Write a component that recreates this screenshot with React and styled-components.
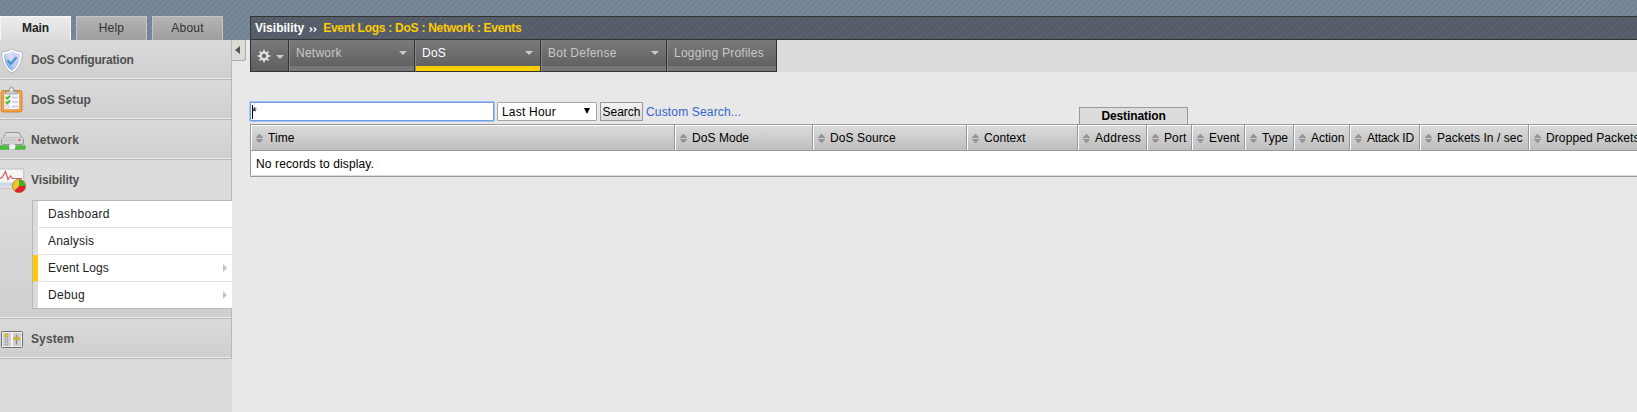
import React from "react";
import styled, { createGlobalStyle } from "styled-components";

const Global = createGlobalStyle`
  * { box-sizing: border-box; }
  html, body { margin: 0; height: 100%; overflow: hidden; }
  body { background: #e8e8e8; font: 12px/14px "Liberation Sans", Arial, sans-serif; color: #000; }
`;

const Page = styled.div`
  display: flex;
  width: 100vw;
  height: 412px;
  overflow: hidden;
  background: linear-gradient(#0000 40px, #e8e8e8 40px),
    repeating-linear-gradient(135deg, #718394 0 2.8px, #7a8b9a 2.8px 4.24px);
`;

const Sidebar = styled.aside`
  width: 232px;
  flex: none;
  display: flex;
  flex-direction: column;
`;
const Tabs = styled.div`
  display: flex;
  gap: 5px;
  height: 40px;
  padding-top: 16px;
`;
const Tab = styled.div`
  width: 71px;
  height: 24px;
  border: 1px solid ${(p) => (p.$on ? "#f6f6f6" : "#c4c4c4")};
  border-bottom: 0;
  background: ${(p) => (p.$on ? "linear-gradient(#ececec, #dcdcdc)" : "linear-gradient(#b4b4b4, #9e9e9e)")};
  color: ${(p) => (p.$on ? "#222" : "#333")};
  font-weight: ${(p) => (p.$on ? 700 : 400)};
  text-align: center;
  line-height: 22px;
  letter-spacing: ${(p) => (p.$on ? "-0.1px" : "0.2px")};
`;
const Nav = styled.nav`
  flex: 1;
  background: #dcdcdc;
`;
const Section = styled.div`
  height: ${(p) => p.$h || 40}px;
  border-right: 1px solid #b8b8b8;
  border-bottom: 1px solid #b8b8b8;
  box-shadow: inset 0 -1px #ececec;
  background: ${(p) => (p.$open ? "linear-gradient(#dcdcdc 40px, #cfcfcf)" : "linear-gradient(#dadada, #cfcfcf)")};
`;
const SectionTitle = styled.div`
  display: flex;
  align-items: center;
  height: 40px;
  font-weight: 700;
  color: #505050;
  letter-spacing: ${(p) => p.$ls || 0}px;
  svg { width: 28px; height: 28px; flex: none; margin-right: 3px; }
`;
const Submenu = styled.div`
  margin-left: 32px;
  width: 200px;
  border: 1px solid #b8b8b8;
  border-right: 0;
  background: #fff;
  position: relative;
`;
const SubItem = styled.div`
  display: flex;
  align-items: center;
  justify-content: space-between;
  height: ${(p) => (p.$last ? 26 : 27)}px;
  padding: 0 5px 0 10px;
  border-left: 5px solid ${(p) => (p.$on ? "#fc0" : "#dcdcdc")};
  border-bottom: ${(p) => (p.$last ? 0 : 1)}px solid #e2e2e2;
  color: #222;
  letter-spacing: ${(p) => p.$ls}px;
`;
const SubArrow = styled.i`
  border: solid transparent;
  border-width: 4px 0 4px 4px;
  border-left-color: #c4c4c4;
`;

const Gutter = styled.div`
  width: 18px;
  flex: none;
  padding-top: 40px;
`;
const Collapse = styled.div`
  display: flex;
  align-items: center;
  width: 14px;
  height: 21px;
  padding-left: 3px;
  background: #dedad6;
  border: 1px solid #aaa;
  border-top: 0;
  border-left: 0;
  border-radius: 0 0 3px 0;
  i { border: 4px solid transparent; border-left: 0; border-right: 5px solid #555; }
`;

const Main = styled.main`
  flex: 1;
  min-width: 0;
  padding-top: 16px;
`;
const Crumbs = styled.div`
  display: flex;
  align-items: center;
  height: 24px;
  padding-left: 4px;
  border: 1px solid #333;
  border-right: 0;
  background: repeating-linear-gradient(135deg, #545d67 0 2.8px, #5a636d 2.8px 4.24px);
  color: #fff;
  font-weight: 700;
  white-space: pre;
  svg { width: 8px; height: 5px; margin: 3px 6px 0 5px; }
`;
const Path = styled.span`
  color: #fc0;
  letter-spacing: -0.26px;
`;
const MenuStrip = styled.div`
  display: flex;
  height: 32px;
  background: #dcdcdc;
`;
const MenuCell = styled.div`
  display: flex;
  justify-content: space-between;
  width: ${(p) => p.$w}px;
  padding: 6px ${(p) => (p.$first ? 4 : 7)}px 0 6px;
  border-left: 1px solid ${(p) => (p.$first ? "#333" : "#888")};
  border-right: 1px solid #333;
  border-bottom: 1px solid #333;
  background: linear-gradient(#7a7a7a, #626262 26px, ${(p) => (p.$on ? "#fc0" : p.$first ? "#606060" : "#777")} 26px);
  color: ${(p) => (p.$on ? "#fff" : "#c8c8c8")};
  letter-spacing: ${(p) => p.$ls || 0.24}px;
  svg { width: 14px; height: 14px; margin-top: 3px; }
`;
const MenuArrow = styled.i`
  align-self: flex-start;
  margin-top: ${(p) => p.$top || 5}px;
  border: 4px solid transparent;
  border-bottom: 0;
  border-top-color: #ccc;
`;

const SearchArea = styled.div`
  display: flex;
  height: 52px;
  padding-top: 30px;
`;
const Query = styled.div`
  width: 244px;
  height: 19px;
  padding: 2px 1px;
  background: #fff;
  border: 1px solid #6f9fe0;
  box-shadow: 0 0 0 1px #a5c1ee;
  border-radius: 1px;
  line-height: 14px;
`;
const Caret = styled.span`
  display: inline-block;
  width: 1px;
  height: 14px;
  margin-right: -1px;
  background: #000;
  vertical-align: top;
`;
const Select = styled.div`
  display: flex;
  justify-content: space-between;
  width: 100px;
  height: 19px;
  margin-left: 3px;
  padding: 2px 6px 0 4px;
  background: #fff;
  border: 1px solid #a4a4a4;
  border-radius: 1px;
  letter-spacing: 0.2px;
  i { margin-top: 3px; height: 0; border: 3.5px solid transparent; border-bottom: 0; border-top: 6px solid #000; }
`;
const Button = styled.div`
  width: 43px;
  height: 19px;
  margin: 0 3px 0 3px;
  padding-top: 2px;
  border: 1px solid #999;
  background: linear-gradient(#f4f4f4, #dcdcdc);
  text-align: center;
`;
const Link = styled.a`
  width: 95px;
  white-space: nowrap;
  margin-top: 3px;
  color: #36c;
  letter-spacing: 0.16px;
`;
const Destination = styled.div`
  width: 109px;
  height: 17px;
  margin: 5px 0 0 338px;
  border: 1px solid #999;
  border-bottom: 0;
  background: #dcdcdc;
  text-align: center;
  font-weight: 700;
  line-height: 17px;
  letter-spacing: -0.1px;
`;

const Table = styled.div`
  border-top: 1px solid #999;
  border-bottom: 1px solid #999;
`;
const HeadRow = styled.div`
  display: flex;
  height: 26px;
  border-bottom: 1px solid #999;
`;
const HeadCell = styled.div`
  flex: none;
  display: flex;
  align-items: center;
  width: ${(p) => p.$w}px;
  padding: 1px 0 0 5px;
  border-left: 1px solid #999;
  background: linear-gradient(#dcdcdc, #bebebe);
  box-shadow: inset 1px 1px #fff;
  letter-spacing: ${(p) => p.$ls}px;
  white-space: nowrap;
  svg { flex: none; width: 7px; height: 9px; margin-right: 5px; }
`;
const Empty = styled.div`
  height: 25px;
  padding: 6px 0 0 5px;
  background: #fff;
  border-left: 1px solid #999;
  border-bottom: 1px solid #ddd;
  letter-spacing: 0.13px;
`;

const columns = [
  ["Time", 424, 0.1], ["DoS Mode", 138, 0.05], ["DoS Source", 154, 0.1], ["Context", 111, 0.05],
  ["Address", 69, 0.3], ["Port", 45, 0.1], ["Event", 53, 0], ["Type", 49, 0], ["Action", 56, 0],
  ["Attack ID", 70, -0.2], ["Packets In / sec", 109, 0.05], ["Dropped Packets", 120, 0.1],
];

const Sort = () => (
  <svg viewBox="0 0 7 9" fill="#949494"><path d="M3.500-.4L7.400 4H-.4zM-.4 5h7.800L3.500 9.400z" /></svg>
);

const Shield = () => (
  <svg viewBox="0 0 28 28">
    <defs>
      <linearGradient id="sh" x1="1" y1="0" x2="0" y2="1">
        <stop offset="0" stopColor="#f4f4ff" /><stop offset=".5" stopColor="#cdd8f4" /><stop offset="1" stopColor="#3f8fd8" />
      </linearGradient>
    </defs>
    <path d="M12 2.600C9 5 5.500 5.700 1.800 5.700 1.200 14 4 22.500 12 27c8-4.500 10.800-13 10.200-21.300-3.700 0-7.200-.7-10.200-3.100z" fill="#fff" stroke="#a2a7b2" strokeWidth=".8" />
    <path d="M12 5C9.500 6.800 6.500 7.500 4 7.700 3.700 14 5.500 20.500 12 24.700c6.500-4.200 8.300-10.700 8-17-2.500-.2-5.500-.9-8-2.700z" fill="url(#sh)" />
    <path d="M12 5c2.500 1.800 5.500 2.500 8 2.700.1 2.500 0 5-.8 7.300H12z" fill="#cfcbf2" opacity=".65" />
    <path d="M12 15h7.200c-1 3.800-3.400 7.200-7.200 9.700z" fill="#b9c6f2" opacity=".7" />
    <path d="M7.500 14.500l3.200 3.300 6-6.500" fill="none" stroke="#4a96c4" strokeWidth="2.400" />
  </svg>
);
const Clipboard = () => (
  <svg viewBox="0 0 28 28">
    <rect x="1.200" y="4.500" width="20.800" height="21.500" rx="2" fill="#f7a03c" stroke="#d07a22" strokeWidth=".8" />
    <path d="M4 7h15.500v16.500H4z" fill="#f6f7fc" stroke="#c08a50" strokeWidth=".5" />
    <path d="M5.500 8V5.300h3.700c0-3 .8-4.300 2.300-4.300s2.300 1.300 2.300 4.300h3.700V8z" fill="#cfcfcf" stroke="#8a8a8a" strokeWidth=".7" />
    <circle cx="11.500" cy="3.800" r="1.100" fill="#fff" />
    <path d="M5.800 11l1.600 1.700L10 9.700M5.800 15.700l1.600 1.700 2.600-3" fill="none" stroke="#3fc01c" strokeWidth="1.900" />
    <path d="M12 11.500h6M12 16h6M12 20.500h6" stroke="#c3cbe4" strokeWidth="1.600" />
    <path d="M6 19h3v2.600H6z" fill="#fff" stroke="#aab" strokeWidth=".6" />
  </svg>
);
const NetworkIcon = () => (
  <svg viewBox="0 0 28 28">
    <path d="M2 14l4-7.500h13L23 14z" fill="#dcdcdc" stroke="#8d8d8d" strokeWidth=".9" />
    <rect x="1.500" y="12" width="22" height="6.500" rx="1.500" fill="#d2d2d2" stroke="#858585" strokeWidth=".8" />
    <path d="M2.200 12.300h20.600" stroke="#dadada" strokeWidth="1.200" />
    <path d="M4 14h12" stroke="#bdbdbd" strokeWidth=".8" />
    <circle cx="19.500" cy="14" r="1" fill="#e33" />
    <path d="M0 19.800h9v3.400H0zM15 19.800h10v3.400H15z" fill="#48c737" stroke="#2d9624" strokeWidth=".6" />
    <rect x="9" y="18" width="6.500" height="5.500" rx="2" fill="#f4f4f4" stroke="#aaa" strokeWidth=".5" />
  </svg>
);
const ChartIcon = () => (
  <svg viewBox="0 0 28 28">
    <path d="M-1 3h24.700v19H-1z" fill="#f6f6f6" stroke="#b5b5b5" strokeWidth=".8" />
    <path d="M0 16.500h16v4H0z" fill="#cbdbe8" />
    <path d="M0 12.500l2-1L5.500 5.500l2.500 8 2.500-3.500 2 2.500H22" fill="none" stroke="#cc5a62" strokeWidth="1.200" />
    <circle cx="19" cy="20" r="6.600" fill="#f2c526" stroke="#8a5b35" strokeWidth=".6" />
    <path d="M19 20v-6.500a6.500 6.500 0 0 1 6.500 6.500z" fill="#47ae24" />
    <path d="M19 20h6.500a6.500 6.500 0 0 1-11 4.700z" fill="#dc2432" />
  </svg>
);
const SystemIcon = () => (
  <svg viewBox="0 0 28 28">
    <rect x="1.500" y="6.500" width="21" height="16" rx="1" fill="#ececec" stroke="#707070" />
    <path d="M3 8h8v13H3zM13 8h8v13h-8z" fill="#d0d0d0" />
    <path d="M12 7.500v14" stroke="#fff" />
    <g stroke="#888" strokeWidth=".8">
      <circle cx="6.500" cy="10.500" r="1.500" fill="#f6d11f" stroke="#a58a20" />
      <circle cx="6.500" cy="14.800" r="1.400" fill="#e2e2e2" />
      <circle cx="6.500" cy="18.700" r="1.400" fill="#e2e2e2" />
      <path d="M16.500 9.500v10" strokeWidth="1.200" />
      <rect x="14" y="12.600" width="5" height="2.200" fill="#f6d11f" stroke="#a58a20" strokeWidth=".6" />
    </g>
  </svg>
);
const Gear = () => (
  <svg viewBox="0 0 14 14">
    <g stroke="#dedede">
      <path d="M7 .8v12.400M.8 7h12.400M2.600 2.600l8.800 8.800M11.400 2.600l-8.800 8.800" strokeWidth="1.900" />
      <circle cx="7" cy="7" r="3.300" fill="#686868" strokeWidth="2.300" />
    </g>
  </svg>
);

export default function App() {
  return (
    <>
      <Global />
      <Page>
        <Sidebar>
          <Tabs>
            <Tab $on>Main</Tab>
            <Tab>Help</Tab>
            <Tab>About</Tab>
          </Tabs>
          <Nav>
            <Section><SectionTitle $ls={-0.19}><Shield />DoS Configuration</SectionTitle></Section>
            <Section><SectionTitle $ls={-0.12}><Clipboard />DoS Setup</SectionTitle></Section>
            <Section><SectionTitle $ls={0.1}><NetworkIcon />Network</SectionTitle></Section>
            <Section $open $h={159}>
              <SectionTitle $ls={-0.1}><ChartIcon />Visibility</SectionTitle>
              <Submenu>
                <SubItem $ls={0.35}>Dashboard</SubItem>
                <SubItem $ls={0.2}>Analysis</SubItem>
                <SubItem $ls={0.08} $on>Event Logs<SubArrow /></SubItem>
                <SubItem $ls={0.35} $last>Debug<SubArrow /></SubItem>
              </Submenu>
            </Section>
            <Section><SectionTitle $ls={0.1}><SystemIcon />System</SectionTitle></Section>
          </Nav>
        </Sidebar>
        <Gutter><Collapse><i /></Collapse></Gutter>
        <Main>
          <Crumbs>
            Visibility
            <svg viewBox="0 0 8 5" fill="none" stroke="#fff" strokeWidth="1.200"><path d="M.8.3L3 2.500.8 4.700M4.800.3L7 2.500 4.800 4.700" /></svg>
            <Path>Event Logs : DoS : Network : Events</Path>
          </Crumbs>
          <MenuStrip>
            <MenuCell $w={39} $first><Gear /><MenuArrow $top={9} /></MenuCell>
            <MenuCell $w={126}>Network<MenuArrow /></MenuCell>
            <MenuCell $w={126} $on>DoS<MenuArrow /></MenuCell>
            <MenuCell $w={126}>Bot Defense<MenuArrow /></MenuCell>
            <MenuCell $w={110}>Logging Profiles</MenuCell>
          </MenuStrip>
          <SearchArea>
            <Query><Caret />*</Query>
            <Select>Last Hour<i /></Select>
            <Button>Search</Button>
            <Link>Custom Search...</Link>
            <Destination>Destination</Destination>
          </SearchArea>
          <Table>
            <HeadRow>
              {columns.map(([name, w, ls]) => (
                <HeadCell key={name} $w={w} $ls={ls}><Sort />{name}</HeadCell>
              ))}
            </HeadRow>
            <Empty>No records to display.</Empty>
          </Table>
        </Main>
      </Page>
    </>
  );
}
